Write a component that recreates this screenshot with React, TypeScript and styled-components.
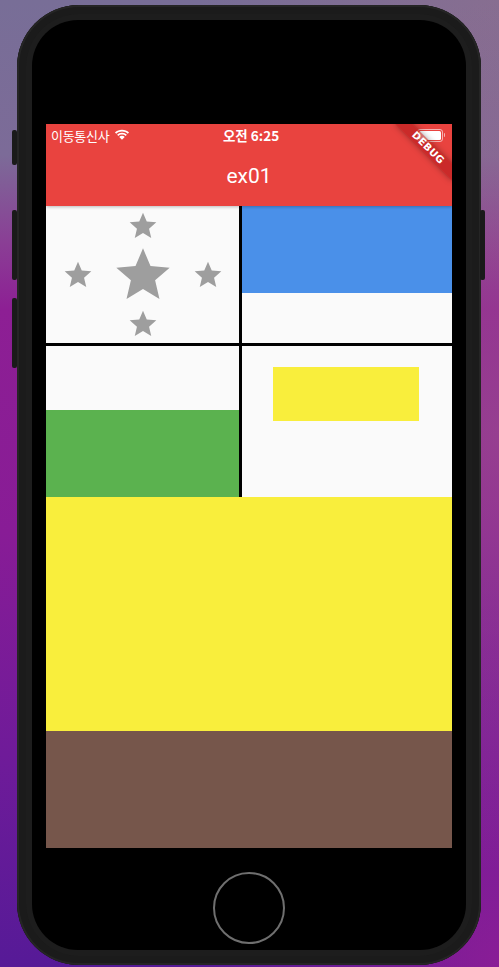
import React from "react";
import styled, { createGlobalStyle } from "styled-components";

const Global = createGlobalStyle`
  html, body { margin: 0; padding: 0; }
  html {
    width: 499px; height: 967px; overflow: hidden;
    background:
      radial-gradient(ellipse 60% 45% at 100% 45%, rgba(160, 90, 140, 0.55), rgba(160, 90, 140, 0) 100%),
      radial-gradient(ellipse 60% 30% at 100% 0%, rgba(145, 110, 140, 0.6), rgba(145, 110, 140, 0) 100%),
      radial-gradient(ellipse 60% 40% at 100% 100%, rgba(150, 30, 150, 0.8), rgba(150, 30, 150, 0) 100%),
      linear-gradient(180deg, #786e97 0%, #7c6b98 16%, #8a3f95 25%, #8d1f94 32%, #881c96 55%, #6f1b99 78%, #561a97 100%);
  }
  body { font-family: "Roboto", "Noto Sans CJK KR", sans-serif; }
`;

const Page = styled.div`
  width: 499px;
  height: 967px;
  padding: 5px 0 0 17px;
  box-sizing: border-box;
`;

const Phone = styled.div`
  position: relative;
  width: 464px;
  height: 960px;
  box-sizing: border-box;
  padding: 15px;
  border-radius: 62px;
  background: #1d1d1d;
  box-shadow: inset 0 0 0 2px #252525, inset 0 0 0 9px #1b1b1b;
  display: flex;
`;

const SideButton = styled.div<{ $top: number; $h: number; $right?: boolean }>`
  position: absolute;
  top: ${(p) => p.$top}px;
  height: ${(p) => p.$h}px;
  width: 5px;
  ${(p) => (p.$right ? "right: -4px;" : "left: -5px;")}
  background: #1a1a1a;
  border-radius: 2px;
`;

const Bezel = styled.div`
  flex: 1;
  background: #000;
  border-radius: 46px;
  display: flex;
  flex-direction: column;
  align-items: center;
  padding-top: 104px;
`;

const Screen = styled.div`
  position: relative;
  width: 406px;
  height: 724px;
  overflow: hidden;
  background: #fafafa;
  display: flex;
  flex-direction: column;
`;

const Header = styled.div`
  background: #e9433f;
  color: #fff;
  box-shadow: 0 1px 3px rgba(0, 0, 0, 0.25);
  position: relative;
  z-index: 1;
`;

const StatusBar = styled.div`
  height: 22px;
  display: grid;
  grid-template-columns: 1fr auto 1fr;
  align-items: center;
  padding: 0 7px 0 5px;
`;

const Carrier = styled.div`
  display: flex;
  align-items: center;
  gap: 5px;
  font-family: "Noto Sans CJK KR", sans-serif;
  font-size: 13px;
  letter-spacing: -0.3px;
`;

const Time = styled.div`
  font-family: "Noto Sans CJK KR", sans-serif;
  font-weight: 700;
  font-size: 13.5px;
  padding-left: 6px;
`;

const BatteryWrap = styled.div`
  justify-self: end;
  display: flex;
  align-items: center;
  gap: 1px;
`;

const BatteryBody = styled.div`
  width: 22px;
  height: 9px;
  border: 1px solid rgba(255, 255, 255, 0.6);
  border-radius: 3px;
  padding: 1px;
  box-sizing: content-box;
  display: flex;
`;

const BatteryFill = styled.div`
  flex: 1;
  background: #fff;
  border-radius: 1.5px;
`;

const BatteryNub = styled.div`
  width: 1.5px;
  height: 4px;
  background: rgba(255, 255, 255, 0.6);
  border-radius: 0 1px 1px 0;
`;

const AppBar = styled.div`
  height: 60px;
  display: flex;
  align-items: center;
  justify-content: center;
  font-size: 21px;
  font-weight: 400;
  font-family: "Roboto", sans-serif;
`;

const Grid = styled.div`
  display: grid;
  grid-template-columns: 193px 3px 210px;
  grid-template-rows: 137px 3px 151px;
  background: #000;
`;

const Cell = styled.div`
  background: #fafafa;
  display: flex;
  flex-direction: column;
`;

const StarCell = styled(Cell)`
  align-items: center;
  justify-content: center;
  padding-top: 1px;
`;

const StarRow = styled.div`
  display: flex;
  align-items: center;
  gap: 17px;
  margin: 1px 0;
`;

const Block = styled.div<{ $color: string; $h: number }>`
  height: ${(p) => p.$h}px;
  background: ${(p) => p.$color};
`;

const Spacer = styled.div`
  flex: 1;
`;

const InsetCell = styled(Cell)`
  padding: 21px 0 0 31px;
`;

const YellowBox = styled.div`
  width: 146px;
  height: 54px;
  background: #f9ee3c;
`;

const Band = styled.div<{ $color: string; $h: number }>`
  height: ${(p) => p.$h}px;
  background: ${(p) => p.$color};
  flex: none;
`;

const Ribbon = styled.div`
  position: absolute;
  z-index: 2;
  left: 342px;
  top: 18px;
  width: 80px;
  height: 12px;
  transform: rotate(45deg);
  background: rgba(183, 28, 28, 0.63);
  box-shadow: 0 0 6px rgba(0, 0, 0, 0.35);
  color: #fff;
  font-family: "DejaVu Sans", sans-serif;
  font-weight: 700;
  font-size: 10px;
  line-height: 12px;
  letter-spacing: 0.4px;
  text-align: center;
`;

const HomeButton = styled.div`
  margin-top: 24px;
  width: 68px;
  height: 68px;
  border-radius: 50%;
  border: 2px solid #6f6f6f;
`;

const Star = ({ size }: { size: number }) => (
  <svg width={size} height={size} viewBox="0 0 24 24" aria-hidden>
    <path
      fill="#9e9e9e"
      d="M12 17.27L18.18 21l-1.64-7.03L22 9.24l-7.19-.61L12 2 9.19 8.63 2 9.24l5.46 4.73L5.82 21z"
    />
  </svg>
);

const Wifi = () => (
  <svg width="16" height="12" viewBox="0 0 15 11" aria-hidden>
    <path
      fill="#fff"
      d="M7.5 2.2c2.1 0 4 .8 5.4 2.1l1.2-1.2C12.4 1.4 10.1.5 7.5.5S2.6 1.4.9 3.1l1.2 1.2C3.5 3 5.4 2.2 7.5 2.2zM7.5 5.1c1.3 0 2.5.5 3.4 1.3l1.2-1.2C10.9 4.1 9.3 3.4 7.5 3.4S4.1 4.1 2.9 5.2l1.2 1.2c.9-.8 2.1-1.3 3.4-1.3zM7.5 6.3c-1 0-1.9.4-2.6 1l2.6 2.7 2.6-2.7c-.7-.6-1.6-1-2.6-1z"
    />
  </svg>
);

export default function App() {
  return (
    <>
      <Global />
      <Page>
        <Phone>
          <SideButton $top={125} $h={35} />
          <SideButton $top={205} $h={70} />
          <SideButton $top={293} $h={70} />
          <SideButton $top={205} $h={70} $right />
          <Bezel>
            <Screen>
              <Header>
                <StatusBar>
                  <Carrier>
                    이동통신사
                    <Wifi />
                  </Carrier>
                  <Time>오전 6:25</Time>
                  <BatteryWrap>
                    <BatteryBody>
                      <BatteryFill />
                    </BatteryBody>
                    <BatteryNub />
                  </BatteryWrap>
                </StatusBar>
                <AppBar>ex01</AppBar>
              </Header>
              <Grid>
                <StarCell>
                  <Star size={32} />
                  <StarRow>
                    <Star size={32} />
                    <Star size={64} />
                    <Star size={32} />
                  </StarRow>
                  <Star size={32} />
                </StarCell>
                <span />
                <Cell>
                  <Block $color="#4a90e9" $h={87} />
                  <Spacer />
                </Cell>
                <span />
                <span />
                <span />
                <Cell>
                  <Spacer />
                  <Block $color="#5bb24f" $h={87} />
                </Cell>
                <span />
                <InsetCell>
                  <YellowBox />
                </InsetCell>
              </Grid>
              <Band $color="#f9ee3c" $h={234} />
              <Band $color="#76564b" $h={117} />
              <Ribbon>DEBUG</Ribbon>
            </Screen>
            <HomeButton />
          </Bezel>
        </Phone>
      </Page>
    </>
  );
}
